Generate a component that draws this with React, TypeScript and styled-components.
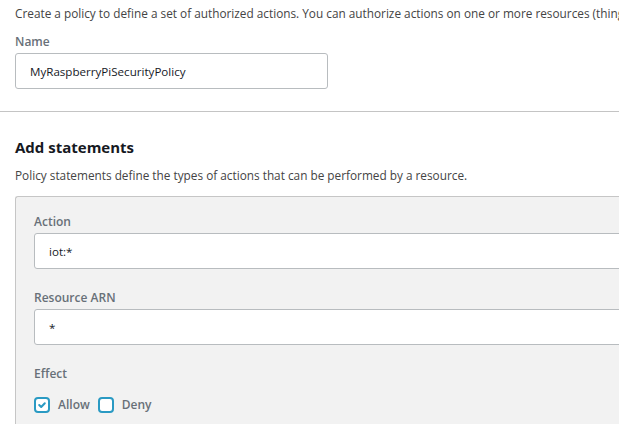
import React from "react";
import styled, { createGlobalStyle } from "styled-components";

const Global = createGlobalStyle`
  html, body { margin: 0; padding: 0; background: #ffffff; overflow: hidden; }
  body { font-family: "Open Sans", "Noto Sans", sans-serif; }
`;

const Page = styled.div`
  width: 619px;
  height: 424px;
  overflow: hidden;
  background: #fff;
`;

const Section = styled.section`
  padding: 5px 15px 22px 15px;
`;

const Intro = styled.p`
  margin: 0;
  font-size: 11.8px;
  line-height: 16px;
  color: #444;
  white-space: nowrap;
`;

const Label = styled.div`
  font-size: 12px;
  font-weight: 600;
  color: #687078;
  line-height: 16px;
  padding-top: 1px;
`;

const Field = styled.div<{ $gap?: number }>`
  display: flex;
  flex-direction: column;
  gap: 3px;
  margin-top: ${(p) => p.$gap ?? 0}px;
`;

const Input = styled.div<{ $width?: string }>`
  box-sizing: border-box;
  width: ${(p) => p.$width ?? "100%"};
  height: 36px;
  border: 1px solid #b8bcbf;
  border-radius: 3px;
  background: #fff;
  display: flex;
  align-items: center;
  padding: 0 14px;
  font-size: 11.6px;
  color: #16191f;
`;

const Divider = styled.hr`
  margin: 0;
  border: none;
  border-top: 1px solid #c4c4c4;
`;

const Heading = styled.h2`
  margin: 0;
  font-size: 15px;
  font-weight: 700;
  color: #16191f;
  line-height: 20px;
`;

const Sub = styled.p`
  margin: 10px 0 0 0;
  font-size: 11.8px;
  line-height: 16px;
  color: #444;
  white-space: nowrap;
`;

const Statements = styled.section`
  padding: 25px 0 0 15px;
`;

const Panel = styled.div`
  margin-top: 13px;
  margin-right: -5px;
  background: #f2f2f2;
  border: 1px solid #c6c6c6;
  border-right: none;
  border-radius: 3px 0 0 0;
  padding: 16px 0 20px 18px;
`;

const Checks = styled.div`
  display: flex;
  align-items: center;
  gap: 8px;
  margin-top: 14px;
`;

const Check = styled.label`
  display: flex;
  align-items: center;
  gap: 8px;
  font-size: 12px;
  font-weight: 600;
  color: #687078;
`;

const Box = styled.span`
  box-sizing: border-box;
  width: 16px;
  height: 16px;
  border: 2px solid #2a9ac3;
  border-radius: 4px;
  display: flex;
  align-items: center;
  justify-content: center;
  background: #fff;
`;

const CheckBox = ({ checked }: { checked?: boolean }) => (
  <Box>
    {checked && (
      <svg width="10" height="10" viewBox="0 0 10 10">
        <path d="M2.2 5 L4.2 7 L7.8 3.2" fill="none" stroke="#2a9ac3" strokeWidth="2" strokeLinecap="round" strokeLinejoin="round" />
      </svg>
    )}
  </Box>
);

export default function App() {
  return (
    <Page>
      <Global />
      <Section>
        <Intro>
          Create a policy to define a set of authorized actions. You can authorize actions on one or more resources (things, topics, topic filters) to allow a device to
        </Intro>
        <Field $gap={12}>
          <Label>Name</Label>
          <Input $width="313px">MyRaspberryPiSecurityPolicy</Input>
        </Field>
      </Section>
      <Divider />
      <Statements>
        <Heading>Add statements</Heading>
        <Sub>Policy statements define the types of actions that can be performed by a resource.</Sub>
        <Panel>
          <Field>
            <Label>Action</Label>
            <Input $width="620px">iot:*</Input>
          </Field>
          <Field $gap={20}>
            <Label>Resource ARN</Label>
            <Input $width="620px">*</Input>
          </Field>
          <Field $gap={20}>
            <Label>Effect</Label>
          </Field>
          <Checks>
            <Check>
              <CheckBox checked />
              Allow
            </Check>
            <Check>
              <CheckBox />
              Deny
            </Check>
          </Checks>
        </Panel>
      </Statements>
    </Page>
  );
}
